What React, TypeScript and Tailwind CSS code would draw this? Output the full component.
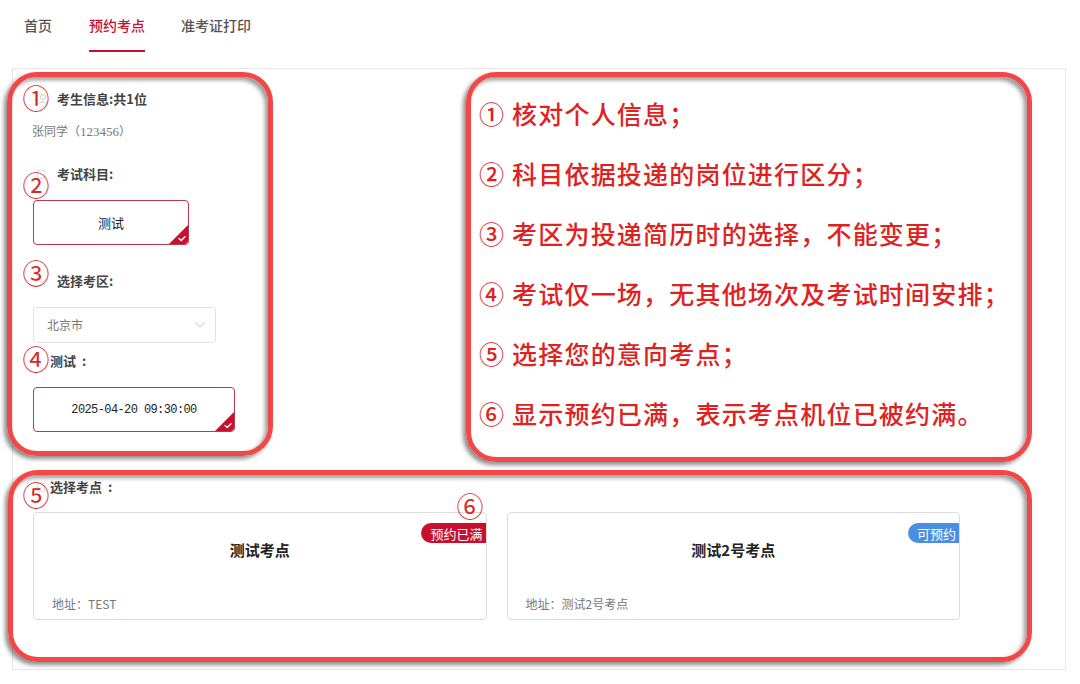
import React from "react";

const boxCls =
  "relative rounded-[30px] border-[5px] border-[#f24747] shadow-[-3px_3px_4px_rgba(0,0,0,0.45),inset_-3px_3px_4px_rgba(0,0,0,0.4)]";

function Circ({ n, cls }: { n: string; cls: string }) {
  return (
    <span
      className={`absolute flex h-[24px] w-[24px] items-center justify-center text-[27px] leading-none text-[#d42a2a] ${cls}`}
    >
      {n}
    </span>
  );
}

function CheckCorner() {
  return (
    <svg className="absolute bottom-0 right-0" width="19" height="19" viewBox="0 0 19 19">
      <path d="M19 0 L19 15 Q19 19 15 19 L0 19 Z" fill="#c8102e" />
      <path d="M10 13.5 L12.2 15.5 L16 11.8" stroke="#fff" strokeWidth="1.4" fill="none" strokeLinecap="round" />
    </svg>
  );
}

function SmallBox() {
  return <span className="mr-[5px] inline-block h-[9px] w-[8px] border border-[#e2e2e2]" />;
}

function Card({ title, addr, badge, badgeCls }: { title: string; addr: string; badge: string; badgeCls: string }) {
  return (
    <div className="relative h-[108px] rounded-[4px] border border-[#dcdcdc] bg-white">
      <span
        className={`absolute right-0 top-[10px] flex h-[20px] items-center rounded-l-full pl-[9px] pr-[3px] text-[13px] leading-none text-white ${badgeCls}`}
      >
        {badge}
      </span>
      <div className="pt-[27px] text-center text-[15px] font-bold leading-[20px] text-[#222]">{title}</div>
      <div className="mt-[34px] pl-[18px] text-[12px] leading-[20px] text-[#777]">{addr}</div>
    </div>
  );
}

export default function App() {
  const notes = [
    "① 核对个人信息；",
    "② 科目依据投递的岗位进行区分；",
    "③ 考区为投递简历时的选择，不能变更；",
    "④ 考试仅一场，无其他场次及考试时间安排；",
    "⑤ 选择您的意向考点；",
    "⑥ 显示预约已满，表示考点机位已被约满。",
  ];
  return (
    <div className="h-[684px] w-[1080px] overflow-hidden bg-white font-['Noto_Sans_CJK_SC',sans-serif]">
      {/* tabs */}
      <nav className="flex h-[68px] pl-[24px] text-[14px]">
        <div className="flex h-[52px] flex-col">
          <div className="flex h-[50px] items-center font-medium text-[#555]">首页</div>
        </div>
        <div className="ml-[37px] flex h-[52px] flex-col">
          <div className="flex h-[50px] items-center font-medium text-[#c8102e]">预约考点</div>
          <div className="h-[2px] bg-[#c8102e]" />
        </div>
        <div className="ml-[36px] flex h-[52px] flex-col">
          <div className="flex h-[50px] items-center font-medium text-[#555]">准考证打印</div>
        </div>
      </nav>

      {/* panel */}
      <div className="ml-[12px] h-[602px] w-[1054px] border border-[#e6e6e6]">
        <div className="ml-[-6px] mt-[3px] flex items-start">
          {/* left form box */}
          <div className={`${boxCls} h-[384px] w-[266px] pt-[12px]`}>
            <div className="flex h-[20px] items-center pl-[25px] text-[13px] font-bold text-[#444]">
              <svg width="12" height="12" viewBox="0 0 12 12" className="mr-[8px]">
                <circle cx="6" cy="4" r="2.5" fill="none" stroke="#ccc" />
                <path d="M1.5 11.5 Q6 6 10.5 11.5" fill="none" stroke="#ccc" />
              </svg>
              考生信息:共1位
            </div>
            <div className="mt-[12px] h-[20px] pl-[20px] text-[12px] leading-[20px] text-[#777]">
              张同学（<span className="font-['Liberation_Serif',serif] text-[13px]">123456</span>）
            </div>
            <div className="mt-[23px] flex h-[20px] items-center pl-[25px] text-[13px] font-bold text-[#444]">
              <SmallBox />
              <span className="ml-[7px]">考试科目:</span>
            </div>
            <div className="relative ml-[21px] mt-[16px] flex h-[45px] w-[156px] items-center justify-center rounded-[4px] border border-[#c0354f] text-[13px] text-[#222]">
              测试
              <CheckCorner />
            </div>
            <div className="mt-[26px] flex h-[20px] items-center pl-[25px] text-[13px] font-bold text-[#444]">
              <svg width="10" height="8" viewBox="0 0 10 8" className="mr-[10px]">
                <path d="M1 2 L5 6 L9 2" fill="none" stroke="#ddd" />
              </svg>
              选择考区:
            </div>
            <div className="ml-[21px] mt-[16px] flex h-[36px] w-[183px] items-center justify-between rounded-[3px] border border-[#e4e4e4] pl-[13px] pr-[9px] text-[12px] text-[#777]">
              北京市
              <svg width="12" height="8" viewBox="0 0 12 8">
                <path d="M1 1.5 L6 6 L11 1.5" fill="none" stroke="#c4c4c4" />
              </svg>
            </div>
            <div className="mt-[8px] flex h-[20px] items-center pl-[38px] text-[13px] font-bold text-[#444]">测试 &nbsp;:</div>
            <div className="relative ml-[21px] mt-[16px] flex h-[45px] w-[202px] items-center justify-center rounded-[4px] border border-[#c0354f] font-['Liberation_Mono',monospace] text-[12px] tracking-[-0.6px] text-[#222]">
              2025-04-20 09:30:00
              <CheckCorner />
            </div>

            <Circ n="①" cls="left-[12px] top-[8px]" />
            <Circ n="②" cls="left-[12px] top-[95px]" />
            <Circ n="③" cls="left-[12px] top-[183px]" />
            <Circ n="④" cls="left-[12px] top-[269px]" />
          </div>

          {/* right notes box */}
          <div className={`${boxCls} ml-[193px] h-[390px] w-[566px] pl-[8px] pt-[6px]`}>
            {notes.map((t) => (
              <div key={t} className="h-[60px] whitespace-nowrap text-[25px] font-medium leading-[60px] tracking-[1.2px] text-[#e0221f]">
                {t}
              </div>
            ))}
          </div>
        </div>

        {/* bottom box */}
        <div className={`${boxCls} ml-[-5px] mt-[8px] h-[192px] w-[1024px] pl-[20px] pt-[2px]`}>
          <div className="flex h-[20px] items-center pl-[4px] text-[13px] font-bold text-[#444]">
            <SmallBox />
            选择考点 &nbsp;:
          </div>
          <div className="mt-[15px] grid w-[927px] grid-cols-2 gap-[20px]">
            <Card title="测试考点" addr="地址：TEST" badge="预约已满" badgeCls="bg-[#c8102e]" />
            <Card title="测试2号考点" addr="地址：测试2号考点" badge="可预约" badgeCls="bg-[#4a8fe2]" />
          </div>
          <Circ n="⑤" cls="left-[11px] top-[7px]" />
          <Circ n="⑥" cls="left-[445px] top-[18px]" />
        </div>
      </div>
    </div>
  );
}
